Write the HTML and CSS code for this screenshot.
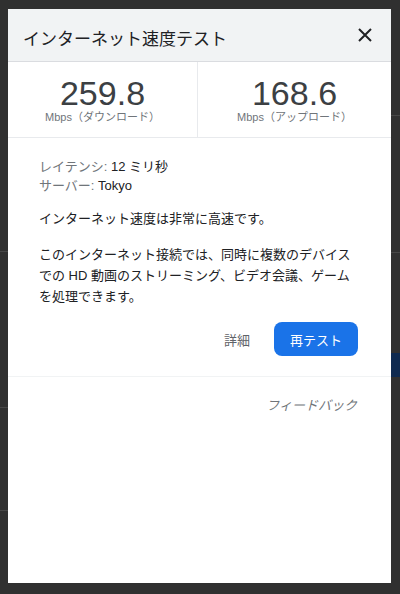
FILE: index.html
```html
<!DOCTYPE html>
<html lang="ja">
<head>
<meta charset="utf-8">
<title>インターネット速度テスト</title>
<link rel="stylesheet" href="styles.css">
</head>
<body>
<div class="dialog">
  <div class="header">
    <div class="title">インターネット速度テスト</div>
    <svg class="close" width="14" height="14" viewBox="0 0 14 14"><path d="M1 1L13 13M13 1L1 13" stroke="#202124" stroke-width="2" fill="none"/></svg>
  </div>
  <div class="stats">
    <div class="stat">
      <div class="num">259.8</div>
      <div class="unit">Mbps（ダウンロード）</div>
    </div>
    <div class="stat">
      <div class="num">168.6</div>
      <div class="unit">Mbps（アップロード）</div>
    </div>
  </div>
  <div class="body">
    <div class="meta"><span class="label">レイテンシ:</span> 12 ミリ秒</div>
    <div class="meta"><span class="label">サーバー:</span> Tokyo</div>
    <p class="summary">インターネット速度は非常に高速です。</p>
    <p class="para">このインターネット接続では、同時に複数のデバイスでの HD 動画のストリーミング、ビデオ会議、ゲームを処理できます。</p>
    <div class="actions">
      <span class="details">詳細</span>
      <span class="retest">再テスト</span>
    </div>
  </div>
  <div class="footer">
    <span class="feedback">フィードバック</span>
  </div>
</div>
</body>
</html>
```

FILE: styles.css
```css
html, body {
  margin: 0;
  padding: 0;
}
body {
  width: 400px;
  height: 594px;
  overflow: hidden;
  font-family: "Liberation Sans", "Noto Sans CJK JP", sans-serif;
  background-color: #303030;
  background-image:
    linear-gradient(#474747, #474747),
    linear-gradient(#474747, #474747),
    linear-gradient(#474747, #474747),
    linear-gradient(#474747, #474747),
    linear-gradient(#474747, #474747),
    linear-gradient(#0f2a50, #0f2a50);
  background-size: 8px 1px, 8px 1px, 8px 1px, 9px 1px, 9px 1px, 9px 24px;
  background-position: 0 251px, 0 407px, 0 510px, 391px 115px, 391px 252px, 391px 353px;
  background-repeat: no-repeat;
}
.dialog {
  margin: 9px 0 0 8px;
  width: 383px;
  height: 574px;
  background: #ffffff;
  display: flex;
  flex-direction: column;
}
.header {
  height: 52px;
  background: #f1f3f4;
  border-bottom: 1px solid #dadce0;
  display: flex;
  align-items: center;
  justify-content: space-between;
  padding: 0 19px 0 15px;
}
.title {
  font-size: 17px;
  line-height: 24px;
  color: #202124;
  padding-top: 9px;
}
.close {
  display: block;
}
.stats {
  display: grid;
  grid-template-columns: 190px 1fr;
  height: 75px;
  border-bottom: 1px solid #e8eaed;
}
.stat {
  display: flex;
  flex-direction: column;
  align-items: center;
  padding-top: 14px;
}
.stat:first-child {
  border-right: 1px solid #e8eaed;
}
.num {
  font-size: 34px;
  line-height: 34px;
  color: #3c4043;
}
.unit {
  font-size: 11px;
  line-height: 14px;
  color: #70757a;
}
.body {
  padding: 19px 33px 20px 31px;
  border-bottom: 1px solid #f1f3f4;
  color: #202124;
  font-size: 13px;
}
.meta {
  line-height: 19px;
}
.label {
  color: #70757a;
}
.summary {
  margin: 13px 0 0;
  line-height: 21px;
}
.para {
  margin: 15px 0 0;
  line-height: 21px;
}
.actions {
  margin-top: 15px;
  display: flex;
  justify-content: flex-end;
  align-items: center;
  gap: 24px;
}
.details {
  color: #5f6368;
  font-size: 13px;
}
.retest {
  width: 84px;
  height: 34px;
  border-radius: 8px;
  background: #1a73e8;
  color: #ffffff;
  font-size: 13px;
  display: flex;
  align-items: center;
  justify-content: center;
}
.footer {
  padding: 19px 34px 0 0;
  display: flex;
  justify-content: flex-end;
}
.feedback {
  font-size: 13px;
  line-height: 19px;
  font-style: italic;
  color: #70757a;
}
```
